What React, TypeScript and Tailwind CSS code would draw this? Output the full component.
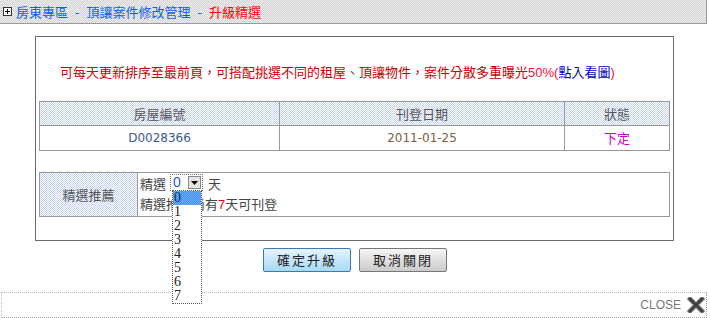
import React from 'react';

const cjk = "font-['Noto_Sans_CJK_TC','Noto_Sans',sans-serif]";

function Sep() {
  return <span className="mx-[7px] text-[#0a5ef0]">-</span>;
}

function PlusIcon() {
  return (
    <svg width="9" height="9" viewBox="0 0 9 9" className="shrink-0">
      <rect x="0.5" y="0.5" width="8" height="8" fill="#fff" stroke="#333" />
      <path d="M2 4.5h5M4.5 2v5" stroke="#000" strokeWidth="1" />
    </svg>
  );
}

function CloseX() {
  return (
    <svg width="18" height="16" viewBox="0 0 18 16">
      <path d="M3 2 L15 14 M15 2 L3 14" stroke="#9a9a9a" strokeWidth="5" strokeLinecap="square" />
      <path d="M3 2 L15 14 M15 2 L3 14" stroke="#3f3f3f" strokeWidth="3" strokeLinecap="square" />
    </svg>
  );
}

const options = ['0', '1', '2', '3', '4', '5', '6', '7'];

export default function App() {
  return (
    <div className={`w-[710px] h-[318px] bg-white overflow-hidden ${cjk} text-[13px]`}>
      <div className="w-[707px]">
        {/* title bar */}
        <div className="h-[24px] flex items-center pl-[3px] border-b border-r border-[#9a9a9a] bg-[repeating-conic-gradient(#cfcfcf_0_25%,#f2f2f2_0_50%)] bg-[length:2px_2px]">
          <PlusIcon />
          <div className="ml-[4px] flex items-center leading-[16px]">
            <span className="text-[#0a5ef0]">房東專區</span>
            <Sep />
            <span className="text-[#0a5ef0]">頂讓案件修改管理</span>
            <Sep />
            <span className="text-[#ff0000]">升級精選</span>
          </div>
        </div>

        {/* main box */}
        <div className="ml-[35px] mt-[12px] w-[639px] border border-[#6b6b6b] px-[3px] pb-[23px]">
          <p className="mt-[27px] pl-[21px] leading-[16px] text-[#cc0000] whitespace-nowrap">
            可每天更新排序至最前頁，可搭配挑選不同的租屋、頂讓物件，案件分散多重曝光
            <span className="text-[#ee1144] font-['Liberation_Sans',sans-serif]">50%(</span>
            <span className="text-[#0000cc]">點入看圖</span>
            <span className="text-[#ee1144] font-['Liberation_Sans',sans-serif]">)</span>
          </p>

          {/* table 1 */}
          <div className="mt-[20px] w-[631px] border-l border-t border-[#999]">
            <div className="flex h-[24px] bg-[repeating-conic-gradient(#c3d3f5_0_25%,#ffffff_0_50%)] bg-[length:2px_2px] text-[#555] leading-[23px]">
              <div className="w-[240px] border-r border-b border-[#999] text-center">房屋編號</div>
              <div className="w-[285px] border-r border-b border-[#999] text-center">刊登日期</div>
              <div className="w-[105px] border-r border-b border-[#999] text-center">狀態</div>
            </div>
            <div className="flex h-[25px] leading-[24px]">
              <div className="w-[240px] border-r border-b border-[#999] text-center text-[#3c5a8c] font-['DejaVu_Sans',sans-serif] text-[12px]">D0028366</div>
              <div className="w-[285px] border-r border-b border-[#999] text-center text-[#7a6040] font-['DejaVu_Sans',sans-serif] text-[12px]">2011-01-25</div>
              <div className="w-[105px] border-r border-b border-[#999] text-center text-[#cc00cc]">下定</div>
            </div>
          </div>

          {/* table 2 */}
          <div className="mt-[21px] w-[631px] border-l border-t border-[#999] flex h-[45px]">
            <div className="w-[98px] border-r border-b border-[#999] flex items-center justify-center text-[#555] bg-[repeating-conic-gradient(#c3d3f5_0_25%,#ffffff_0_50%)] bg-[length:2px_2px]">
              精選推薦
            </div>
            <div className="flex-1 border-r border-b border-[#999] pl-[2px] pt-[1px] text-[#444] leading-[20px]">
              <div className="flex items-center h-[20px]">
                <span>精選</span>
                <div className="relative ml-[4px] self-start mt-[0px] w-[33px] h-[17px] border border-dotted border-[#777] flex items-center">
                  <span className="pl-[2px] w-[16px] text-[#3355cc] font-['Liberation_Sans',sans-serif] text-[14px] leading-[15px]">0</span>
                  <div className="ml-auto mr-[1px] w-[13px] h-[13px] bg-[#e4e4e4] border border-[#888] flex items-center justify-center">
                    <svg width="7" height="4" viewBox="0 0 7 4"><path d="M0 0h7L3.5 4z" fill="#000" /></svg>
                  </div>
                  <div className="absolute left-[1px] top-[15px] w-[30px] h-[114px] bg-white border border-dotted border-[#555] z-10 font-['Liberation_Serif',serif] text-[14px] leading-[14px] text-[#222]">
                    {options.map((o, i) => (
                      <div key={o} className={i === 0 ? 'h-[14px] pl-[1px] bg-[repeating-conic-gradient(#3a8ef0_0_25%,#6fb0f8_0_50%)] bg-[length:2px_2px] text-[#1a2a55]' : 'h-[14px] pl-[1px]'}>
                        {o}
                      </div>
                    ))}
                  </div>
                </div>
                <span className="ml-[5px]">天</span>
              </div>
              <div className="h-[20px] whitespace-nowrap">
                精選推薦尚有<span className="text-[#ff0000] font-['Liberation_Sans',sans-serif]">7</span>天可刊登
              </div>
            </div>
          </div>
        </div>

        {/* buttons */}
        <div className="mt-[7px] flex justify-center gap-[8px] pl-[3px]">
          <button className="w-[88px] h-[24px] rounded-[2px] border border-[#3a79b5] bg-gradient-to-b from-[#e6f3ff] to-[#a6daf4] text-[#222] tracking-[2px] leading-[22px]">
            確定升級
          </button>
          <button className="w-[88px] h-[24px] rounded-[2px] border border-[#777] bg-gradient-to-b from-[#f6f6f6] to-[#cbcbcb] text-[#222] tracking-[2px] leading-[22px]">
            取消關閉
          </button>
        </div>

        {/* bottom bar */}
        <div className="mt-[20px] ml-[1px] w-[706px] h-[26px] border-t border-l border-dotted border-t-[#bbb] border-l-[#bbb] border-b border-r border-b-[#999] border-r-[#999] border-b-solid flex items-center justify-end pr-[1px]">
          <span className="font-['Liberation_Sans',sans-serif] text-[12px] text-[#777] mr-[6px]">CLOSE</span>
          <CloseX />
        </div>
      </div>
    </div>
  );
}
